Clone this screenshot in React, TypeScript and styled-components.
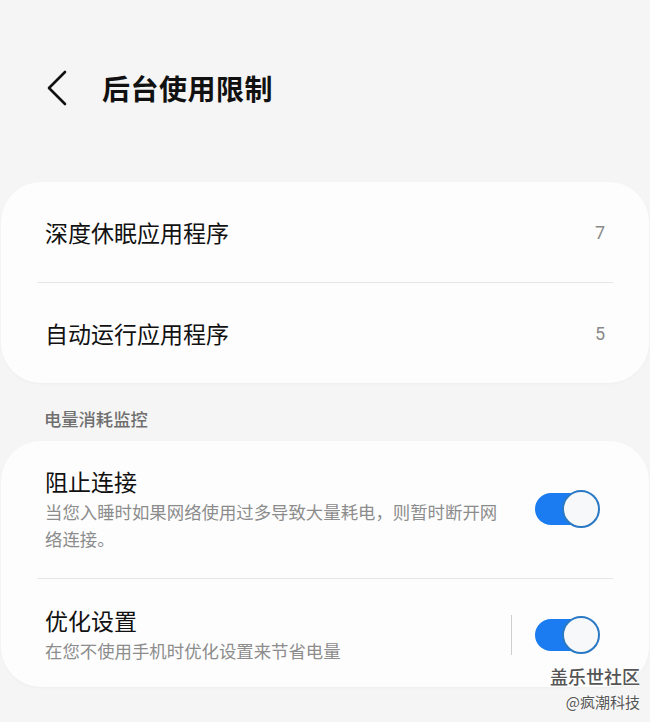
import styled, { createGlobalStyle } from 'styled-components'

const GlobalStyle = createGlobalStyle`
  html, body {
    margin: 0;
    padding: 0;
    background: #f5f5f5;
  }
  body {
    font-family: "Noto Sans CJK SC", "Noto Sans", sans-serif;
    color: #111;
  }
`

const Page = styled.div`
  position: relative;
  min-height: 722px;
  overflow: hidden;
`

const Header = styled.div`
  display: flex;
  align-items: center;
  height: 60px;
  margin-top: 58px;
  padding-left: 46px;
  .back {
    width: 22px;
    height: 36px;
    margin-right: 34px;
  }
  h1 {
    margin: 0;
    font-size: 28px;
    font-weight: 700;
    letter-spacing: 0.5px;
  }
`

const Card = styled.div<{ $top: number }>`
  margin: ${p => p.$top}px 1px 0;
  background: #fdfdfd;
  border-radius: 40px;
  box-shadow: 0 1px 3px rgba(0, 0, 0, 0.03);
`

const LinkRow = styled.div`
  display: flex;
  align-items: center;
  justify-content: space-between;
  height: 100px;
  padding: 0 44px;
  .title {
    font-size: 23px;
  }
  .count {
    font-family: Roboto, "Noto Sans", sans-serif;
    font-size: 18px;
    color: #8a8a8a;
  }
`

const Divider = styled.div`
  height: 1px;
  margin: 0 36px;
  background: #e6e6e6;
`

const SectionLabel = styled.div`
  padding: 24px 44px 10px;
  font-size: 17.3px;
  line-height: 24px;
  font-weight: 500;
  color: #6f6f6f;
`

const ToggleRow = styled.div<{ $pt: number; $pb: number }>`
  display: flex;
  align-items: center;
  padding: ${p => p.$pt}px 49px ${p => p.$pb}px 44px;
`

const TextCol = styled.div`
  flex: 1;
  min-width: 0;
  .title {
    font-size: 23px;
    line-height: 30px;
  }
  .desc {
    width: 460px;
    margin-top: 2px;
    font-size: 17.4px;
    line-height: 27px;
    color: #8c8c8c;
  }
`

const VLine = styled.div`
  width: 1px;
  height: 40px;
  margin-right: 23px;
  background: #cfcfcf;
`

const Switch = styled.div`
  position: relative;
  width: 65px;
  height: 38px;
  flex-shrink: 0;
  .track {
    position: absolute;
    left: 0;
    top: 3px;
    width: 50px;
    height: 32px;
    border-radius: 16px 0 0 16px;
    background: #1a7cf0;
  }
  .knob {
    position: absolute;
    right: 0;
    top: 0;
    width: 34px;
    height: 34px;
    border-radius: 50%;
    border: 2px solid #2a79c4;
    background: #f7f8fa;
  }
`

const Watermark = styled.div`
  position: absolute;
  right: 10px;
  top: 664px;
  text-align: right;
  color: #555;
  text-shadow: 0 0 2px #fff, 0 0 2px #fff;
  .brand {
    font-size: 18px;
    line-height: 24px;
    font-weight: 500;
  }
  .author {
    margin-top: 4px;
    font-size: 15px;
    line-height: 20px;
  }
`

const Toggle = () => (
  <Switch>
    <div className="track" />
    <div className="knob" />
  </Switch>
)

export default function App() {
  return (
    <Page>
      <GlobalStyle />
      <Header>
        <svg className="back" viewBox="0 0 22 36" fill="none">
          <polyline points="19,2 3,18 19,34" stroke="#111" strokeWidth="2.6" strokeLinecap="round" strokeLinejoin="round" />
        </svg>
        <h1>后台使用限制</h1>
      </Header>

      <Card $top={64}>
        <LinkRow>
          <span className="title">深度休眠应用程序</span>
          <span className="count">7</span>
        </LinkRow>
        <Divider />
        <LinkRow>
          <span className="title">自动运行应用程序</span>
          <span className="count">5</span>
        </LinkRow>
      </Card>

      <SectionLabel>电量消耗监控</SectionLabel>

      <Card $top={0}>
        <ToggleRow $pt={25} $pb={26}>
          <TextCol>
            <div className="title">阻止连接</div>
            <div className="desc">当您入睡时如果网络使用过多导致大量耗电，则暂时断开网络连接。</div>
          </TextCol>
          <Toggle />
        </ToggleRow>
        <Divider />
        <ToggleRow $pt={26} $pb={23}>
          <TextCol>
            <div className="title">优化设置</div>
            <div className="desc">在您不使用手机时优化设置来节省电量</div>
          </TextCol>
          <VLine />
          <Toggle />
        </ToggleRow>
      </Card>

      <Watermark>
        <div className="brand">盖乐世社区</div>
        <div className="author">@疯潮科技</div>
      </Watermark>
    </Page>
  )
}
